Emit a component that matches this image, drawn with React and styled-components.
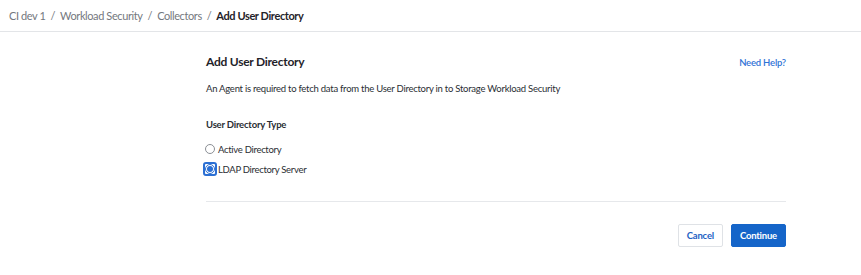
import React, { useState } from 'react';
import styled, { createGlobalStyle } from 'styled-components';

const GlobalStyle = createGlobalStyle`
  html, body {
    margin: 0;
    padding: 0;
    background: #fff;
    font-family: Lato, "Noto Sans", sans-serif;
    color: #1f2329;
  }
`;

const Page = styled.div`
  width: 861px;
  height: 275px;
  background: #fff;
`;

const Breadcrumbs = styled.nav`
  display: flex;
  align-items: center;
  height: 32px;
  padding-left: 9px;
  border-bottom: 1px solid #e3e5e8;
  font-size: 11px;
  letter-spacing: -0.4px;
  box-sizing: border-box;
`;

const Crumb = styled.span`
  color: ${(p) => (p.$current ? '#1f2329' : '#74787e')};
  font-weight: ${(p) => (p.$current ? 700 : 400)};
`;

const Sep = styled.span`
  color: #74787e;
  margin: 0 5px;
`;

const Panel = styled.section`
  width: 580px;
  margin-left: 206px;
  padding-top: 22px;
`;

const HeaderRow = styled.div`
  display: flex;
  justify-content: space-between;
  align-items: baseline;
`;

const Title = styled.h1`
  margin: 0;
  font-size: 12px;
  letter-spacing: -0.25px;
  font-weight: 700;
  color: #1f2329;
`;

const HelpLink = styled.a`
  font-size: 9.5px;
  letter-spacing: -0.2px;
  font-weight: 600;
  color: #2f73d6;
  text-decoration: none;
  cursor: pointer;
`;

const Description = styled.p`
  margin: 14px 0 0;
  font-size: 9.5px;
  letter-spacing: -0.25px;
  color: #2a2e33;
`;

const FieldLabel = styled.div`
  margin-top: 25px;
  font-size: 9.5px;
  letter-spacing: -0.2px;
  font-weight: 700;
  color: #2a2e33;
`;

const Options = styled.div`
  display: flex;
  flex-direction: column;
  gap: 6px;
  margin-top: 12px;
`;

const Option = styled.label`
  display: flex;
  align-items: center;
  gap: 1px;
  font-size: 9.5px;
  letter-spacing: -0.3px;
  color: #2a2e33;
  cursor: pointer;
`;

const RadioBox = styled.span`
  display: inline-flex;
  align-items: center;
  justify-content: center;
  width: 14px;
  height: 14px;
  margin-left: -3px;
  border-radius: 3px;
  box-sizing: border-box;
  border: 2px solid ${(p) => (p.$focused ? '#2b6fd3' : 'transparent')};
`;

const RadioDot = styled.span`
  width: 10px;
  height: 10px;
  border-radius: 50%;
  box-sizing: border-box;
  border: 1px solid ${(p) => (p.$checked ? '#2b6fd3' : '#8b8f95')};
  background: #fff;
  display: flex;
  align-items: center;
  justify-content: center;

  &::after {
    content: '';
    width: 6px;
    height: 6px;
    border-radius: 50%;
    background: ${(p) => (p.$checked ? '#2b6fd3' : 'transparent')};
  }
`;

const Divider = styled.hr`
  margin: 25px 0 0;
  border: none;
  border-top: 1px solid #e6e8eb;
`;

const Actions = styled.div`
  display: flex;
  justify-content: flex-end;
  gap: 8px;
  margin-top: 22px;
`;

const Button = styled.button`
  height: 23px;
  min-width: ${(p) => (p.$primary ? '55px' : '45px')};
  padding: 0 8px;
  border-radius: 2px;
  font-family: inherit;
  font-size: 9.5px;
  letter-spacing: -0.2px;
  font-weight: 700;
  cursor: pointer;
  border: 1px solid ${(p) => (p.$primary ? '#1565c9' : '#dfe2e6')};
  background: ${(p) => (p.$primary ? '#1565c9' : '#fff')};
  color: ${(p) => (p.$primary ? '#fff' : '#2461c4')};
`;

const options = [
  { id: 'ad', label: 'Active Directory' },
  { id: 'ldap', label: 'LDAP Directory Server' },
];

export default function App() {
  const [type, setType] = useState('ldap');

  return (
    <Page>
      <GlobalStyle />
      <Breadcrumbs>
        <Crumb>CI dev 1</Crumb>
        <Sep>/</Sep>
        <Crumb>Workload Security</Crumb>
        <Sep>/</Sep>
        <Crumb>Collectors</Crumb>
        <Sep>/</Sep>
        <Crumb $current>Add User Directory</Crumb>
      </Breadcrumbs>

      <Panel>
        <HeaderRow>
          <Title>Add User Directory</Title>
          <HelpLink>Need Help?</HelpLink>
        </HeaderRow>
        <Description>
          An Agent is required to fetch data from the User Directory in to Storage Workload Security
        </Description>

        <FieldLabel>User Directory Type</FieldLabel>
        <Options>
          {options.map((o) => (
            <Option key={o.id} onClick={() => setType(o.id)}>
              <RadioBox $focused={type === o.id}>
                <RadioDot $checked={type === o.id} />
              </RadioBox>
              {o.label}
            </Option>
          ))}
        </Options>

        <Divider />

        <Actions>
          <Button>Cancel</Button>
          <Button $primary>Continue</Button>
        </Actions>
      </Panel>
    </Page>
  );
}
